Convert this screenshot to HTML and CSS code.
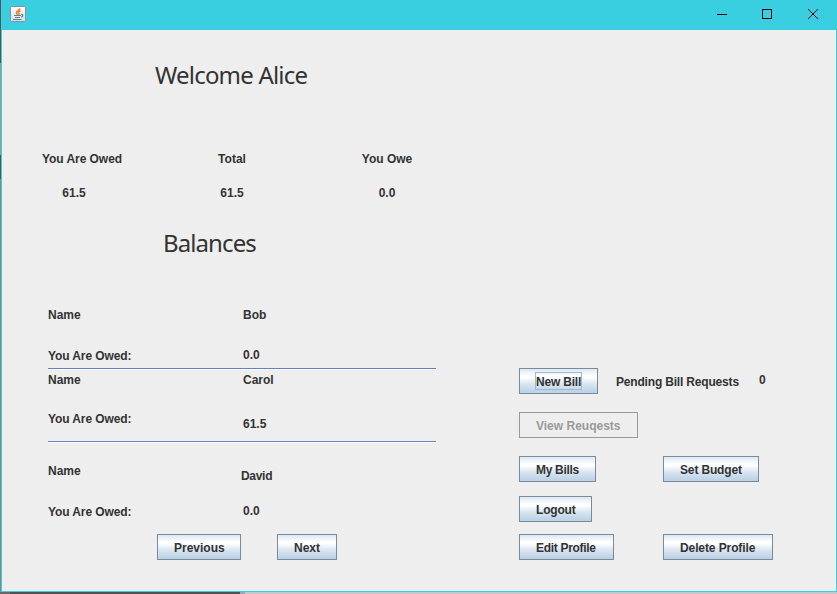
FILE: index.html
```html
<!DOCTYPE html>
<html lang="en">
<head>
<meta charset="utf-8">
<title>Bills</title>
<link rel="stylesheet" href="styles.css">
</head>
<body>
<div class="window">
  <header class="titlebar">
    <svg class="app-icon" width="16" height="16" viewBox="0 0 16 16">
      <defs><linearGradient id="tile" x1="0" y1="0" x2="0" y2="1"><stop offset="0" stop-color="#fff"/><stop offset="1" stop-color="#d5dde2"/></linearGradient></defs>
      <rect x=".5" y=".5" width="15" height="15" rx="1" fill="url(#tile)" stroke="#7f95a5"/>
      <path d="M10 2.500C9.500 4.500 6 5 6.500 7c.2.9.9 1 1 2M10.500 5C8.500 5.500 8 6.500 9 7.500c.4.500 0 1-.5 1.500" fill="none" stroke="#f08422" stroke-width="1.500"/>
      <path d="M4 9.500h7M5 11.500h5M3 13.500h8.500M11 8.500c2.500-.5 2.500 2 0 2.500" fill="none" stroke="#5c83a3" stroke-width="1.200"/>
    </svg>
    <svg class="controls" width="102" height="12" viewBox="0 0 102 12" fill="none" stroke="#000">
      <path d="M0 6.500h10"/>
      <rect x="45.500" y="1.500" width="9" height="9"/>
      <path d="M91 1l10 10M101 1L91 11"/>
    </svg>
  </header>
  <main class="content">
    <section class="overview">
      <h1 class="heading welcome">Welcome Alice</h1>
      <div class="totals">
        <div class="total"><span>You Are Owed</span><span>61.5</span></div>
        <div class="total"><span>Total</span><span>61.5</span></div>
        <div class="total"><span>You Owe</span><span>0.0</span></div>
      </div>
      <h2 class="heading balances">Balances</h2>
      <div class="entry bob">
        <div class="col"><span>Name</span><span>You Are Owed:</span></div>
        <div class="col"><span>Bob</span><span>0.0</span></div>
      </div>
      <div class="entry carol">
        <div class="col"><span>Name</span><span>You Are Owed:</span></div>
        <div class="col"><span>Carol</span><span>61.5</span></div>
      </div>
      <div class="entry david">
        <div class="col"><span>Name</span><span>You Are Owed:</span></div>
        <div class="col"><span class="person">David</span><span>0.0</span></div>
      </div>
      <div class="pager">
        <button class="btn previous">Previous</button>
        <button class="btn next">Next</button>
      </div>
    </section>
    <section class="actions">
      <div class="row requests">
        <button class="btn new-bill"><span class="focus">New Bill</span></button>
        <span class="pending">Pending Bill Requests</span>
        <span class="count">0</span>
      </div>
      <div class="row view"><button class="btn view-requests" disabled>View Reuqests</button></div>
      <div class="row bills"><button class="btn my-bills">My Bills</button><button class="btn budget">Set Budget</button></div>
      <div class="row session"><button class="btn logout">Logout</button></div>
      <div class="row profile"><button class="btn edit">Edit Profile</button><button class="btn delete">Delete Profile</button></div>
    </section>
  </main>
</div>
</body>
</html>
```
FILE: styles.css
```css
* { box-sizing: border-box; }
body {
  margin: 0;
  width: 837px;
  height: 594px;
  padding-left: 1px;
  overflow: hidden;
  background:
    linear-gradient(90deg, #686868 10px, #505152 10px 240px, #9ca7b7 240px 245px, #c5c7ca 245px) 0 592px / 837px 2px no-repeat,
    linear-gradient(#555 63px, #999 63px 155px, #555 155px 179px, #858585 179px) 0 0 / 1px 594px no-repeat;
  font: bold 12px/16px "Liberation Sans", Arial, sans-serif;
  color: #333;
}
.window {
  width: 836px;
  height: 592px;
  border: solid #3acfe0;
  border-width: 0 1px 1px;
  background: #eee;
}
.titlebar {
  height: 30px;
  padding: 6px 17px 0 8px;
  display: flex;
  justify-content: space-between;
  background: #3acfe0;
}
.controls { margin-top: 2px; }
.content { display: flex; height: 561px; }
.overview { width: 517px; }
.overview span, .pending, .count { display: block; white-space: nowrap; }
.heading {
  margin: 0;
  height: 32px;
  font: 24px/32px "Noto Sans", "Open Sans", sans-serif;
  letter-spacing: -0.8px;
}
.welcome { padding: 29px 0 0 153px; height: 61px; }
.totals { display: flex; height: 106px; padding: 60px 0 0 40px; }
.total { display: flex; flex-direction: column; align-items: center; gap: 18px; }
.total:nth-child(1) { width: 80px; margin-right: 96px; padding-right: 16px; }
.total:nth-child(1) span:first-child { margin-right: -16px; letter-spacing: -0.05px; }
.total:nth-child(2) { width: 28px; margin-right: 116px; }
.total:nth-child(3) { width: 50px; }
.balances { padding: 0 0 0 161px; margin-top: 30px; letter-spacing: -0.9px; }
.entry { display: flex; width: 388px; margin-left: 46px; }
.col { display: flex; flex-direction: column; }
.col:first-child { width: 195px; }
.col:first-child span:last-child { letter-spacing: -0.1px; }
.bob { height: 80px; margin-top: 30px; padding-top: 18px; border-bottom: 1px solid #6382bf; box-shadow: 0 1px #fff; }
.bob .col:first-child { gap: 25px; }
.bob .col:last-child { gap: 24px; }
.carol { height: 73px; padding-top: 3px; border-bottom: 1px solid #6382bf; box-shadow: 0 1px #fff; }
.carol .col:first-child { gap: 23px; }
.carol .col:last-child { gap: 28px; }
.david { height: 92px; padding-top: 21px; }
.david .col:first-child { gap: 25px; }
.david .col:last-child { padding-top: 5px; gap: 19px; }
.person { margin-left: -2px; letter-spacing: -0.3px; }
.pager { display: flex; gap: 36px; padding-left: 155px; }
.btn {
  height: 26px;
  padding: 2px 0 0 16px;
  border: 1px solid #7a8a99;
  border-radius: 0;
  font: inherit;
  color: #333;
  text-align: left;
  white-space: nowrap;
  background: linear-gradient(#dce8f3, #fff 30%, #fff 35%, #dae6f1 62%, #b8cfe5);
}
.btn:disabled { color: #999; border-color: #999; background: #eee; }
.previous { width: 84px; }
.next { width: 60px; }
.actions { padding-top: 338px; }
.row { display: flex; }
.requests { height: 44px; }
.new-bill { width: 79px; padding: 0 0 0 15px; letter-spacing: -0.2px; }
.focus { display: block; width: 47px; height: 18px; line-height: 18px; border: 1px solid #a3b8cc; }
.pending { margin: 6px 0 0 18px; width: 123px; letter-spacing: -0.18px; }
.count { margin: 4px 0 0 20px; }
.view { height: 44px; }
.view-requests { width: 119px; }
.bills { height: 40px; }
.my-bills { width: 77px; letter-spacing: -0.3px; }
.budget { width: 96px; margin-left: 67px; letter-spacing: -0.15px; }
.session { height: 38px; }
.logout { width: 73px; letter-spacing: -0.2px; }
.edit { width: 95px; letter-spacing: -0.3px; }
.delete { width: 110px; margin-left: 49px; letter-spacing: -0.1px; }
```
